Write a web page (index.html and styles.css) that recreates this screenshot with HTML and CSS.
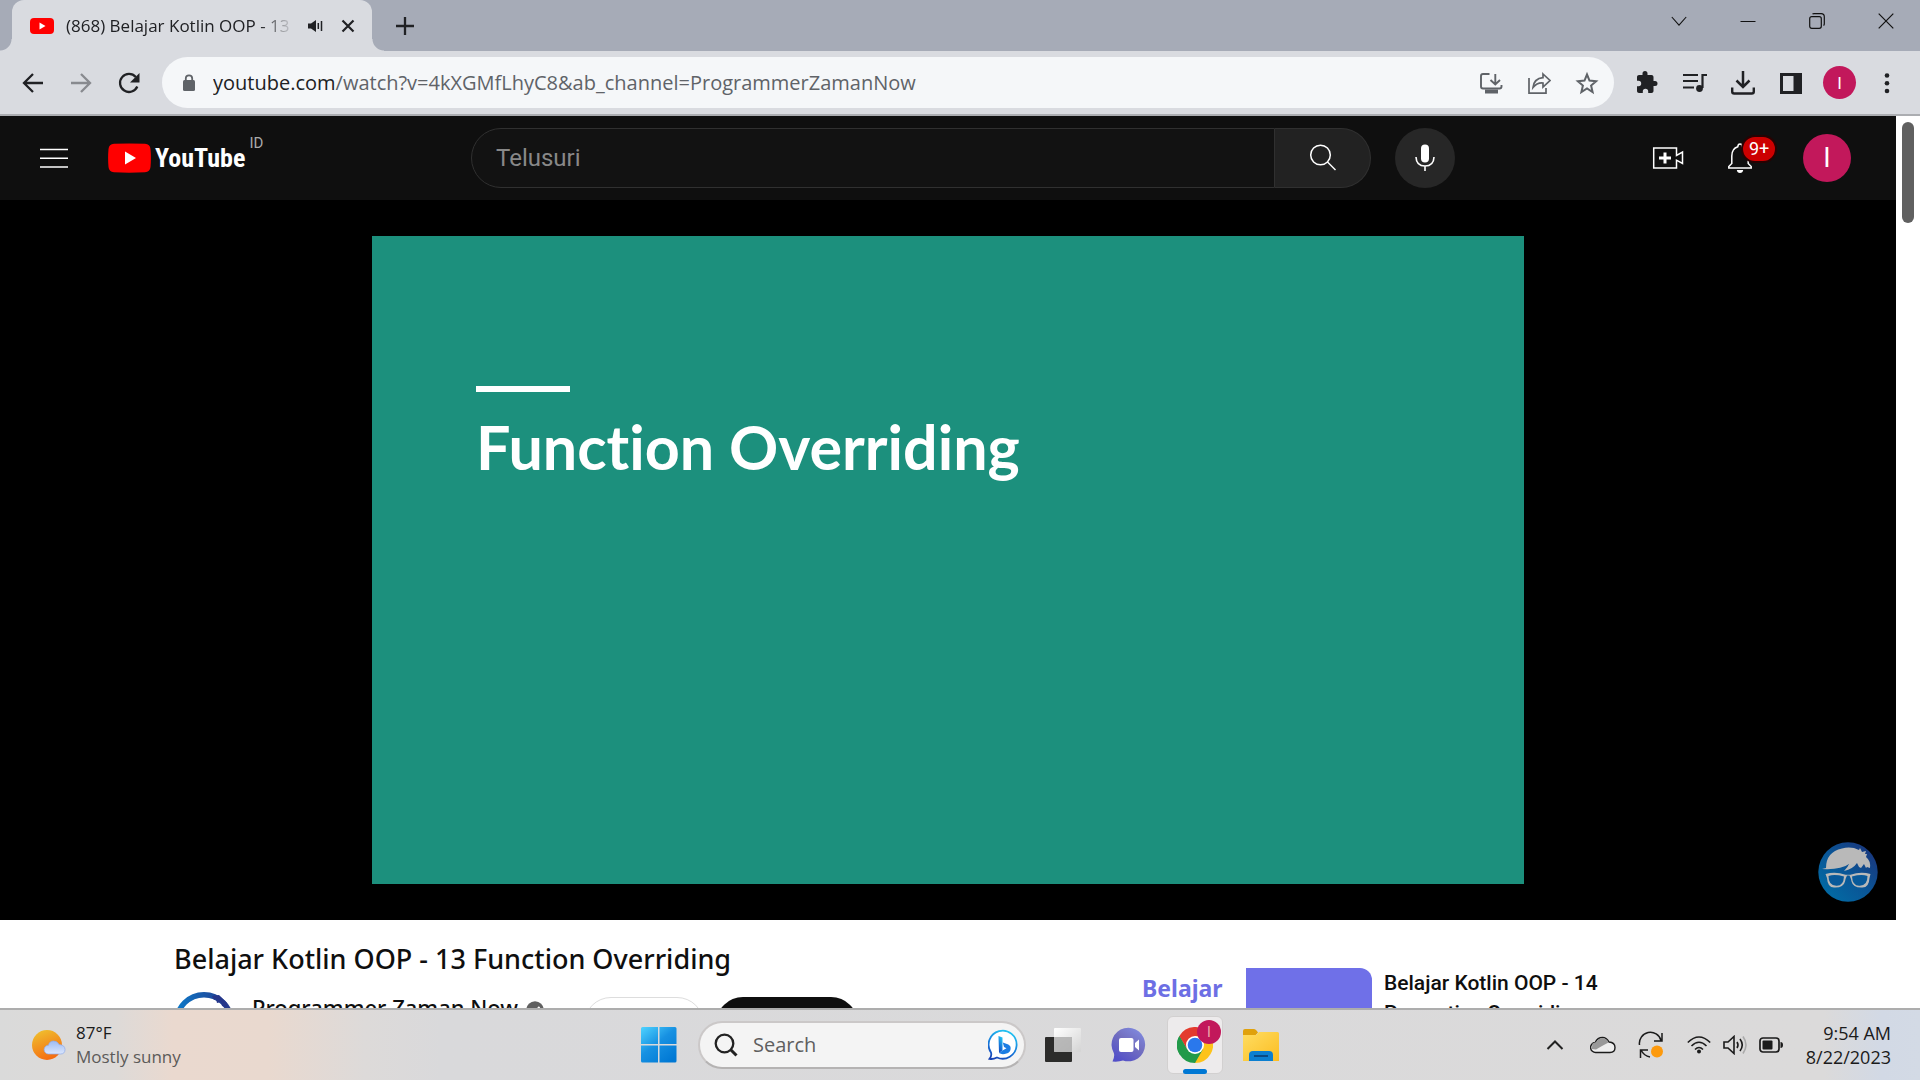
FILE: index.html
```html
<!DOCTYPE html>
<html lang="id">
<head>
<meta charset="utf-8">
<title>Belajar Kotlin OOP - 13 Function Overriding</title>
<link rel="stylesheet" href="styles.css">
</head>
<body>
<header class="tabstrip">
  <div class="tab">
    <svg class="favicon" width="24" height="16" viewBox="0 0 24 16"><rect width="24" height="16" rx="4" fill="#f00"/><path d="M9.500 4.500v7l6-3.500z" fill="#fff"/></svg>
    <span class="tab-title">(868) Belajar Kotlin OOP - 13</span>
    <button class="tab-button" aria-label="Mute tab"><svg width="16" height="14" viewBox="0 0 16 14"><path d="M0 4.500h3L8 1v12L3 9.500H0z" fill="#202124"/><path d="M10.300 4v6M13.500 2v10" stroke="#202124" stroke-width="1.500" fill="none"/></svg></button>
    <button class="tab-button" aria-label="Close tab"><svg width="14" height="14" viewBox="0 0 14 14"><path d="M1.500 1.500l11 11m0-11l-11 11" stroke="#202124" stroke-width="2.200"/></svg></button>
  </div>
  <button class="new-tab" aria-label="New tab"><svg width="18" height="18" viewBox="0 0 18 18"><path d="M9 0v18M0 9h18" stroke="#202124" stroke-width="2.300"/></svg></button>
  <div class="window-controls">
    <button aria-label="Search tabs"><svg width="16" height="16" viewBox="0 0 16 16"><path d="M.8 4L8 12.200 15.200 4" fill="none" stroke="#111" stroke-width="1.100"/></svg></button>
    <button aria-label="Minimize"><svg width="16" height="16" viewBox="0 0 16 16"><path d="M.5 8.500h15" stroke="#111"/></svg></button>
    <button aria-label="Restore"><svg width="16" height="16" viewBox="0 0 16 16"><rect x=".7" y="3.700" width="11.600" height="11.600" rx="2" fill="none" stroke="#111" stroke-width="1.200"/><path d="M3.500 1.200Q4 .7 5 .7h7.200q3.100 0 3.100 3.100V11q0 1-.8 1.500" fill="none" stroke="#111" stroke-width="1.200"/></svg></button>
    <button aria-label="Close"><svg width="16" height="16" viewBox="0 0 16 16"><path d="M.7.700l14.600 14.600m0-14.600L.7 15.300" stroke="#111" stroke-width="1.200"/></svg></button>
  </div>
</header>

<nav class="toolbar">
  <button class="tool" aria-label="Back"><svg width="24" height="24" viewBox="0 0 24 24"><path d="M22 12H3.500M12 3L3 12l9 9" fill="none" stroke="#202124" stroke-width="2.300"/></svg></button>
  <button class="tool" aria-label="Forward"><svg width="24" height="24" viewBox="0 0 24 24"><path d="M2 12h18.500M12 3l9 9-9 9" fill="none" stroke="#888a8f" stroke-width="2.300"/></svg></button>
  <button class="tool" aria-label="Reload"><svg width="24" height="24" viewBox="0 0 24 24"><path d="M20.300 15.500A9 9 0 1 1 18.800 6" fill="none" stroke="#202124" stroke-width="2.300"/><path d="M22.500 2v9.500H13z" fill="#202124"/></svg></button>
  <div class="omnibox">
    <svg class="lock" width="14" height="18" viewBox="0 0 14 18"><rect x="1" y="6" width="12" height="11" rx="1.500" fill="#5f6368"/><path d="M3.800 7V4.500a3.200 3.200 0 0 1 6.400 0V7" fill="none" stroke="#5f6368" stroke-width="1.800"/></svg>
    <a class="url" href="#"><b>youtube.com</b>/watch?v=4kXGMfLhyC8&amp;ab_channel=ProgrammerZamanNow</a>
    <button class="tool" aria-label="Install"><svg width="24" height="24" viewBox="0 0 24 24" fill="none" stroke="#5f6368" stroke-width="1.900"><path d="M10.500 3H4Q2 3 2 5v10.500q0 2 2 2h16.500q2 0 2-2V14"/><path d="M16.300 3v10M11.500 9l4.800 4.500L21 9"/><path d="M6 20.500h13" stroke-width="4"/></svg></button>
    <button class="tool" aria-label="Share"><svg width="24" height="24" viewBox="0 0 24 24" fill="none" stroke="#5f6368" stroke-width="1.700"><path d="M2 7v15.200h17V17"/><path d="M16 3l7 6.500-7 6.500v-4q-6-.5-10 4.500 1-9 10-9.800z"/></svg></button>
    <button class="tool" aria-label="Bookmark"><svg width="24" height="24" viewBox="0 0 24 24"><path d="M12 3.500l2.500 6.100 6.600.6-5 4.300 1.500 6.500L12 17.500 6.400 21l1.500-6.500-5-4.300 6.600-.6z" fill="none" stroke="#5f6368" stroke-width="2"/></svg></button>
  </div>
  <button class="tool" aria-label="Extensions"><svg width="24" height="24" viewBox="0 0 24 24"><path d="M19.500 11H18V7c0-1.100-.9-2-2-2h-4V3.500a2.500 2.500 0 0 0-5 0V5H3.500c-1.100 0-2 .9-2 2v3.800H3a2.700 2.700 0 0 1 0 5.400H1.500V21c0 1.100.9 2 2 2h3.800v-1.500a2.700 2.700 0 0 1 5.400 0V23H16c1.100 0 2-.9 2-2v-5h1.500a2.500 2.500 0 0 0 0-5z" transform="translate(.5 -1)" fill="#202124"/></svg></button>
  <button class="tool" aria-label="Media"><svg width="24" height="24" viewBox="0 0 24 24" fill="none" stroke="#202124" stroke-width="2.200"><path d="M0 4h15M0 10h15M0 16.500h11M24 4h-4.500v13"/><circle cx="16.500" cy="17.500" r="3.400" fill="#202124" stroke="none"/></svg></button>
  <button class="tool" aria-label="Downloads"><svg width="24" height="24" viewBox="0 0 24 24" fill="none" stroke="#202124" stroke-width="2.500"><path d="M12 0v15M5.500 9.500L12 16l6.500-6.500"/><path d="M1.200 16.500v4q0 2 2 2h17.600q2 0 2-2v-4" stroke-width="2.400"/></svg></button>
  <button class="tool" aria-label="Side panel"><svg width="24" height="24" viewBox="0 0 24 24"><path d="M1 2h22v21H1zm3 3v15h10.500V5z" fill-rule="evenodd" fill="#202124"/></svg></button>
  <button class="profile" aria-label="Profile">I</button>
  <button class="tool" aria-label="Menu"><svg width="24" height="24" viewBox="0 0 24 24" fill="#202124"><circle cx="12" cy="4.500" r="2.300"/><circle cx="12" cy="12.200" r="2.300"/><circle cx="12" cy="20" r="2.300"/></svg></button>
</nav>

<div class="viewport">
  <div class="page">
    <header class="masthead">
      <div class="brand">
        <button class="icon-button" aria-label="Guide"><svg width="28" height="20" viewBox="0 0 28 20"><path d="M0 1.500h28M0 10.200h28M0 19h28" stroke="#fff" stroke-width="1.500"/></svg></button>
        <a class="logo" href="#">
          <svg width="43" height="30" viewBox="0 0 43 30"><path d="M6 .8Q21 0 37 .8 42 1 42.500 6q.8 9 0 18-.5 5-5.500 5.300-16 .8-31 0Q1 29 .5 24q-.8-9 0-18Q1 1 6 .8z" fill="#f00"/><path d="M17 8.500v13L28 15z" fill="#fff"/></svg>
          <span class="wordmark">YouTube</span><span class="country">ID</span>
        </a>
      </div>
      <form class="search">
        <input class="search-box" type="text" placeholder="Telusuri" aria-label="Telusuri">
        <button class="search-go" type="button" aria-label="Cari"><svg width="30" height="30" viewBox="0 0 30 30" fill="none" stroke="#fff" stroke-width="1.500"><circle cx="12.500" cy="12" r="9.800"/><path d="M19.500 19l8 8"/></svg></button>
        <button class="mic" type="button" aria-label="Suara"><svg width="30" height="30" viewBox="0 0 30 30"><rect x="11" y="1.500" width="8" height="18" rx="4" fill="#fff"/><path d="M6 14q.3 9 9 9t9-9M15 23v5" fill="none" stroke="#fff" stroke-width="1.600"/></svg></button>
      </form>
      <div class="account">
        <button class="icon-button" aria-label="Buat"><svg width="32" height="24" viewBox="0 0 32 24" fill="none" stroke="#fff" stroke-width="1.500"><path d="M24.500 14.200V22H1.700V2h22.800v7.500l6-3.500v11.500l-6-3.300z"/><path d="M13 6.500v11M7 12h12" stroke-width="3"/></svg></button>
        <button class="icon-button bell" aria-label="Notifikasi"><svg width="26" height="32" viewBox="0 0 26 32"><path d="M1.800 26v-1.500l3-3V14q0-7.500 6-9.300Q11 2 13 2t2.200 2.700q6 1.800 6 9.300v7.500l3 3V26z" fill="none" stroke="#fff" stroke-width="1.500"/><path d="M9.800 28h6.400q-.4 3-3.200 3t-3.200-3z" fill="#fff"/></svg><span class="badge">9+</span></button>
        <button class="avatar" aria-label="Akun">I</button>
      </div>
    </header>

    <section class="player">
      <div class="slide">
        <div class="slide-rule"></div>
        <h2 class="slide-title">Function Overriding</h2>
      </div>
      <svg class="watermark" width="60" height="60" viewBox="0 0 60 60">
        <defs><linearGradient id="mark" x1="0" y1="1" x2="1" y2="0"><stop offset="0" stop-color="#0071a8"/><stop offset=".5" stop-color="#0a5596"/><stop offset="1" stop-color="#1d2f77"/></linearGradient></defs>
        <circle cx="30" cy="30" r="29.700" fill="url(#mark)"/>
        <path d="M8 26Q8 10 24 6.500 33 4 41 8l1-2 2 4 4-1-1 3 2 0-1 3q5 4 4 11l-3-1-1 1-2-4-3 4-2-1-2-4q-4 6-13 8 4-4 5-7-8 6-27 5z" fill="#b9b9b9"/>
        <path d="M7.500 32q10-3 20 .8h5q10-3.800 20-.8l-1 4q-.5 9.500-7 9.500-9.500.5-11-6-.5-3-2-6h-2.500q-1.500 3-2 6-1.500 6.500-11 6-6.500 0-7-9.500z" fill="#b9b9b9"/>
        <path d="M10.500 34q6-2 15.500.5-.5 9.500-7.500 9.200-8 .2-8-9.700zM34 34.500q9.500-2.500 15.500-.5 0 9.900-8 9.700-7 .3-7.500-9.200z" fill="#08599a"/>
      </svg>
    </section>

    <main class="columns">
      <article class="primary">
        <h1 class="title">Belajar Kotlin OOP - 13 Function Overriding</h1>
        <div class="owner">
          <svg width="60" height="60" viewBox="0 0 60 60"><defs><linearGradient id="ring" x1="0" x2="1"><stop offset="0" stop-color="#0d79c8"/><stop offset="1" stop-color="#25368a"/></linearGradient></defs><circle cx="30" cy="30" r="27.300" fill="#fff" stroke="url(#ring)" stroke-width="5.400"/><path d="M38 4l2 4 2-1 1 4 4-1 1 4 5 2 0-5-8-8z" fill="#25368a"/></svg>
          <a class="channel" href="#">Programmer Zaman Now</a>
          <svg class="verified" width="18" height="18" viewBox="0 0 18 18"><circle cx="9" cy="9" r="8.700" fill="#606060"/><path d="M4.500 9.300l3 3 6-6.500" fill="none" stroke="#fff" stroke-width="1.900"/></svg>
          <button class="join" aria-label="Gabung"></button>
          <button class="subscribe" aria-label="Subscribe"></button>
        </div>
      </article>
      <aside class="related">
        <a class="thumb" href="#"><span class="thumb-text">Belajar</span><span class="thumb-fill"></span></a>
        <a class="related-title" href="#">Belajar Kotlin OOP - 14<br>Properties Overriding</a>
      </aside>
    </main>
  </div>
  <div class="scrollbar"><div class="scroll-thumb"></div></div>
</div>

<footer class="taskbar">
  <button class="weather">
    <svg width="34" height="34" viewBox="0 0 34 34"><defs><linearGradient id="sun" x1=".2" y1="0" x2=".6" y2="1"><stop offset="0" stop-color="#efc02f"/><stop offset="1" stop-color="#f56a10"/></linearGradient><linearGradient id="puff" x1="0" y1="0" x2="0" y2="1"><stop offset="0" stop-color="#9dbcf5"/><stop offset="1" stop-color="#dbe6fc"/></linearGradient></defs><circle cx="15" cy="17" r="15" fill="url(#sun)"/><path d="M16.500 26a4.400 4.400 0 0 1 0-8.800q1-4.200 5-4.200t5.500 3.500q6 .5 6 5t-4.500 4.500z" fill="url(#puff)" stroke="#8fabea" stroke-width=".7"/></svg>
    <span class="weather-text"><span>87°F</span><span class="muted">Mostly sunny</span></span>
  </button>
  <div class="apps">
    <button class="app" aria-label="Start"><svg width="36" height="36" viewBox="0 0 36 36"><defs><linearGradient id="win" x1="0" y1="0" x2=".8" y2="1"><stop offset="0" stop-color="#4fd3ff"/><stop offset=".5" stop-color="#1791e2"/><stop offset="1" stop-color="#0078d4"/></linearGradient></defs><path d="M1.500 0H17v17H0V1.500Q0 0 1.500 0zM18.500 0h15.500q1.500 0 1.500 1.500V17h-17zM0 18.500h17V35.500H1.500Q0 35.500 0 34zM18.500 18.500h17V34q0 1.500-1.500 1.500H18.500z" fill="url(#win)"/></svg></button>
    <label class="task-search">
      <svg width="24" height="24" viewBox="0 0 24 24" fill="none" stroke="#222" stroke-width="2.300"><circle cx="10.500" cy="10.500" r="8.800"/><path d="M16.500 16.500l6 6" stroke-width="3"/></svg>
      <input type="text" placeholder="Search" aria-label="Search">
      <svg width="32" height="32" viewBox="0 0 32 32"><defs><linearGradient id="bing" x1=".6" y1="0" x2=".2" y2="1"><stop offset="0" stop-color="#22c1f1"/><stop offset=".6" stop-color="#1673d8"/><stop offset="1" stop-color="#1743b5"/></linearGradient></defs><path d="M1.500 29.800Q4 27 3 23.500A14 14 0 1 1 9 28.500Q5 30.500 1.500 29.800z" fill="#fff" stroke="url(#bing)" stroke-width="1.800"/><path d="M10.500 7l4 1.500v13L11 24z" fill="url(#bing)"/><path d="M11 24l3.500-2.500 4-2.300-2.500-1.200-1.200-4.500 5.500 2q3 1.500 2.200 5-.5 3-4 4-4.500 1.500-7.500-.5z" fill="#1b7de3"/></svg>
    </label>
    <button class="app" aria-label="Task view"><svg width="36" height="36" viewBox="0 0 36 36"><defs><linearGradient id="pane" x1="0" y1="0" x2="1" y2="1"><stop offset="0" stop-color="#fff"/><stop offset="1" stop-color="#d4d4d4"/></linearGradient></defs><rect x="0" y="10" width="27" height="25" rx="1" fill="#2c2c2b"/><rect x="9" y="1" width="27" height="24" rx="1" fill="url(#pane)"/><path d="M9 10h18v15H9z" fill="#aaa" opacity=".8"/></svg></button>
    <button class="app" aria-label="Chat"><svg width="36" height="36" viewBox="0 0 36 36"><defs><linearGradient id="chat" x1="1" y1="0" x2=".3" y2="1"><stop offset="0" stop-color="#8390e8"/><stop offset=".5" stop-color="#7370c0"/><stop offset="1" stop-color="#5350c8"/></linearGradient></defs><path d="M1.500 34.500Q4 29 2.800 26A16.800 16.800 0 1 1 12 33.500Q8 35 1.500 34.500z" fill="url(#chat)"/><rect x="8" y="11" width="14.500" height="14" rx="2" fill="#fff"/><path d="M24 16l4-3.500v11L24 20z" fill="#fff"/></svg></button>
    <button class="app active" aria-label="Chrome"><svg width="36" height="36" viewBox="0 0 36 36"><path d="M18 18L2.400 9A18 18 0 0 1 33.600 9z" fill="#e33b2e"/><path d="M18 18V9h15.600A18 18 0 0 1 18 36z" fill="#fdc31a"/><path d="M2.400 9A18 18 0 0 0 18 36l7.800-13.500L18 18l-7.800 4.500z" fill="#229a4a"/><path d="M2.400 9H18v9h-9.500z" fill="#e33b2e"/><path d="M2.400 9l7.800 13.500L18 18V9z" fill="#e33b2e"/><path d="M2.400 9l7.800 13.500 3 1.500L11 30 3 27.900A18 18 0 0 1 2.400 9z" fill="#229a4a"/><circle cx="18" cy="18" r="9" fill="#fff"/><circle cx="18" cy="18" r="7.300" fill="#2a78ec"/></svg><span class="app-badge">I</span></button>
    <button class="app" aria-label="File Explorer"><svg width="36" height="36" viewBox="0 0 36 36"><defs><linearGradient id="fold" x1="0" y1="0" x2="1" y2="1"><stop offset="0" stop-color="#ffdd62"/><stop offset="1" stop-color="#fbbd22"/></linearGradient></defs><path d="M0 4q0-2 2-2h9q1.500 0 2.500 1.500L15 5.500 12 9H0z" fill="#e0a10c"/><path d="M0 8h12q1.500 0 2.500-1.200L16 5h18.500Q36 5 36 6.500V34H0z" fill="url(#fold)"/><path d="M6 34v-6q0-4 4-4h16q4 0 4 4v6z" fill="#0b7fd0"/><path d="M11 29h14" stroke="#0a4a84" stroke-width="2"/></svg></button>
  </div>
  <div class="tray">
    <button class="tray-button" aria-label="Show hidden icons"><svg width="18" height="12" viewBox="0 0 18 12"><path d="M1.500 10L9 2.500l7.500 7.500" fill="none" stroke="#222" stroke-width="2"/></svg></button>
    <button class="tray-button" aria-label="OneDrive"><svg width="26" height="20" viewBox="0 0 26 20"><path d="M6 17.500a5 5 0 0 1-.8-10Q7.500 2.500 12.500 2.500q4 0 6.500 4.500 6 .5 6 5.500t-5 5z" fill="#eee" stroke="#1b1b1b" stroke-width="1.400"/><path d="M2.500 8.500Q5 7 6.500 7q2-4 6-4t6 4.500L12 11 6 14.500 1.800 14z" fill="#999"/></svg></button>
    <button class="tray-button" aria-label="Windows Update"><svg width="26" height="28" viewBox="0 0 26 28" fill="none" stroke="#1b1b1b" stroke-width="1.500"><path d="M1.500 14A11 11 0 0 1 23 9.500M24 2v8h-8M12 26Q6 25 3 19M2.500 27v-8H10"/><circle cx="19" cy="20.500" r="6" fill="#fd9a0d" stroke="none"/></svg></button>
    <button class="tray-status" aria-label="Network, volume, battery">
      <svg width="24" height="18" viewBox="0 0 24 18" fill="none" stroke="#1b1b1b" stroke-width="1.600"><path d="M.8 6.500q11.200-11 22.400 0M4.500 10q7.500-7.500 15 0M8 13.500q4-4 8 0"/><circle cx="12" cy="15.500" r="2" fill="#1b1b1b" stroke="none"/></svg>
      <svg width="24" height="20" viewBox="0 0 24 20" fill="none" stroke="#1b1b1b" stroke-width="1.600"><path d="M1 7h4l6-5.500v17L5 13H1z"/><path d="M14 7q2 3 0 6M17 4q4.500 6 0 12"/><path d="M20 1.500q6 8.500 0 17" stroke="#aaa"/></svg>
      <svg width="24" height="18" viewBox="0 0 24 18"><rect x="1" y="2" width="19" height="14" rx="3" fill="none" stroke="#1b1b1b" stroke-width="1.700"/><rect x="3.500" y="4.500" width="10" height="9" rx="1" fill="#1b1b1b"/><path d="M21.500 6q2.500 0 2.500 3t-2.500 3z" fill="#1b1b1b"/></svg>
    </button>
    <button class="clock"><span>9:54 AM</span><span>8/22/2023</span></button>
  </div>
</footer>
</body>
</html>
```
FILE: styles.css
```css
* { box-sizing: border-box; }
body {
  margin: 0;
  height: 100vh;
  display: flex;
  flex-direction: column;
  overflow: hidden;
  background: #fff;
  font-family: "Noto Sans", "Open Sans", sans-serif;
}
button {
  display: flex;
  align-items: center;
  justify-content: center;
  padding: 0;
  border: 0;
  background: none;
  font: inherit;
  color: inherit;
}
input { border: 0; outline: 0; background: none; padding: 0; font: inherit; min-width: 0; }
a { color: inherit; text-decoration: none; }
svg { display: block; flex: none; }

/* Browser tabs */
.tabstrip {
  display: flex;
  flex: none;
  height: 51px;
  padding-left: 12px;
  background: #a6abb7;
}
.tab {
  position: relative;
  display: flex;
  align-items: center;
  width: 360px;
  padding: 0 12px 0 18px;
  border-radius: 12px 12px 0 0;
  background: #d9dbe0;
}
.tab::before, .tab::after {
  content: "";
  position: absolute;
  bottom: 0;
  width: 12px;
  height: 12px;
}
.tab::before { right: 100%; background: radial-gradient(circle at 0 0, transparent 11px, #d9dbe0 12px); }
.tab::after { left: 100%; background: radial-gradient(circle at 100% 0, transparent 11px, #d9dbe0 12px); }
.tab-title {
  flex: 1;
  margin: 0 10px 0 12px;
  overflow: hidden;
  white-space: nowrap;
  font-family: "Open Sans", sans-serif;
  font-size: 17px;
  line-height: 24px;
  color: #202124;
  -webkit-mask-image: linear-gradient(90deg, #000 85%, transparent);
  mask-image: linear-gradient(90deg, #000 85%, transparent);
}
.tab-button { width: 24px; height: 24px; }
.tab-button + .tab-button { margin-left: 8px; }
.new-tab { width: 42px; margin-left: 12px; }
.window-controls { display: flex; margin-left: auto; height: 42px; }
.window-controls button { width: 69px; }

/* Browser toolbar */
.toolbar {
  display: flex;
  align-items: center;
  flex: none;
  height: 65px;
  padding: 0 9px;
  border-bottom: 2px solid #abadb1;
  background: #d9dbe0;
}
.tool { flex: none; width: 48px; height: 42px; }
.omnibox {
  display: flex;
  flex: 1;
  align-items: center;
  height: 51px;
  margin: 0 9px;
  padding: 0 3px 0 20px;
  border-radius: 26px;
  background: #f5f7f9;
}
.url {
  flex: 1;
  margin-left: 17px;
  overflow: hidden;
  white-space: nowrap;
  font-family: "Open Sans", sans-serif;
  font-size: 20px;
  color: #5f6368;
}
.url b { font-weight: 400; color: #202124; }
.profile {
  width: 33px;
  height: 33px;
  margin: 0 7px 0 8px;
  border-radius: 50%;
  background: #c2185b;
  color: #fff;
  font-family: Roboto, sans-serif;
  font-size: 17px;
}

/* Page */
.viewport { display: flex; flex: 1; min-height: 0; }
.page { flex: 1; min-width: 0; overflow: hidden; }
.scrollbar { width: 24px; padding: 6px; background: #fff; }
.scroll-thumb { height: 101px; border-radius: 6px; background: #606060; }

.masthead {
  display: flex;
  align-items: center;
  height: 84px;
  padding: 0 45px 0 24px;
  background: #0f0f0f;
  color: #fff;
  font-family: Roboto, sans-serif;
}
.icon-button { width: 60px; height: 60px; }
.brand { display: flex; align-items: center; flex: none; width: 447px; gap: 24px; }
.logo { display: flex; align-items: center; }
.wordmark {
  margin-left: 4px;
  font-family: "Liberation Sans Narrow", "Roboto Condensed", Roboto, sans-serif;
  font-weight: 700;
  font-size: 26px;
}
.country { align-self: flex-start; margin: -9px 0 0 4px; font-size: 15px; line-height: 18px; color: #aaa; }
.search { display: flex; flex: 1; height: 60px; }
.search-box {
  flex: 1;
  padding-left: 24px;
  border: 1px solid #303030;
  border-radius: 30px 0 0 30px;
  background: #121212;
  color: #fff;
  font-size: 24px;
}
.search-box::placeholder { color: #888; opacity: 1; }
.search-go {
  width: 96px;
  border: 1px solid #303030;
  border-left: 0;
  border-radius: 0 30px 30px 0;
  background: #222;
}
.mic { width: 60px; margin-left: 24px; border-radius: 50%; background: #272727; }
.account { display: flex; align-items: center; margin-left: 183px; gap: 12px; }
.bell { position: relative; }
.badge {
  position: absolute;
  top: 7px;
  left: 31px;
  padding: 0 6px;
  border: 2px solid #280202;
  border-radius: 14px;
  background: #c00;
  font-size: 18px;
  line-height: 24px;
}
.avatar {
  width: 48px;
  height: 48px;
  margin-left: 21px;
  border-radius: 50%;
  background: #c2185b;
  font-size: 27px;
}

.player {
  position: relative;
  display: flex;
  justify-content: center;
  padding: 36px 0;
  background: #000;
}
.slide {
  width: 1152px;
  max-width: 100%;
  aspect-ratio: 16 / 9;
  padding: 150px 104px 0;
  background: #1c907d;
  color: #fff;
}
.slide-rule { width: 94px; height: 6px; background: #fff; }
.slide-title {
  margin: 18px 0 0;
  font: 700 61px/74px Lato, sans-serif;
  font-variant-ligatures: none;
  white-space: nowrap;
}
.watermark { position: absolute; right: 18px; bottom: 18px; }

.columns { display: flex; gap: 36px; padding: 0 174px; color: #0f0f0f; }
.primary { flex: 1; min-width: 0; }
.title { margin: 18px 0 12px; font: 500 27px/42px "Noto Sans", sans-serif; }
.owner { display: flex; height: 60px; }
.channel { margin: 0 8px 0 18px; font: 500 22px/30px "Noto Sans", sans-serif; white-space: nowrap; }
.verified { margin-top: 9px; }
.join, .subscribe { height: 54px; margin-top: 5px; border-radius: 27px; }
.join { width: 120px; margin-left: 40px; border: 1px solid #ddd; }
.subscribe { width: 142px; margin-left: 12px; background: #0f0f0f; }
.related { display: flex; width: 602px; gap: 12px; padding-top: 48px; font-family: Roboto, sans-serif; }
.thumb {
  display: flex;
  width: 252px;
  height: 142px;
  border-radius: 12px;
  overflow: hidden;
}
.thumb-text { width: 126px; padding-left: 22px; font: 700 23px/40px "Noto Sans", sans-serif; color: #6d6fe4; }
.thumb-fill { flex: 1; background: #6f70e8; }
.related-title { font-weight: 500; font-size: 21px; line-height: 30px; }

/* Taskbar */
.taskbar {
  display: grid;
  grid-template-columns: 1fr auto 1fr;
  flex: none;
  height: 72px;
  padding-bottom: 1px;
  border-top: 2px solid #adadad;
  background: linear-gradient(90deg, #dadada 0, #dddad8 6%, #ead9cf 9%, #e9d9cf 14%, #dddad9 19%, #d9d9db 23%, #dbdada 95%, #d2d9e5 98%, #d3dae5 100%);
  color: #1b1b1b;
  font-family: "Open Sans", sans-serif;
  font-size: 17px;
  line-height: 24px;
}
.weather { justify-self: start; padding-left: 32px; gap: 10px; }
.weather-text { display: flex; flex-direction: column; align-items: flex-start; }
.muted { color: #5c5a59; }
.apps { display: flex; align-items: center; }
.app { position: relative; width: 66px; height: 58px; }
.active::before {
  content: "";
  position: absolute;
  inset: 0 5px;
  border: 1px solid #d2d0d0;
  border-radius: 6px;
  background: #edebec;
}
.active::after {
  content: "";
  position: absolute;
  bottom: 0;
  width: 24px;
  height: 5px;
  border-radius: 3px;
  background: #0078d4;
}
.active svg { position: relative; }
.app-badge {
  position: absolute;
  top: 4px;
  left: 35px;
  width: 24px;
  height: 24px;
  border-radius: 50%;
  background: #c2185b;
  color: #eaa;
  font: 14px/24px Roboto, sans-serif;
}
.task-search {
  display: flex;
  align-items: center;
  width: 328px;
  height: 48px;
  margin: 0 4px 0 6px;
  padding: 0 4px 0 14px;
  border: 2px solid #cbc8c8;
  border-bottom-color: #b5b3b3;
  border-radius: 24px;
  background: #f4f4f4;
}
.task-search input { flex: 1; margin-left: 15px; font-size: 20px; }
.task-search input::placeholder { color: #5f5f5f; opacity: 1; }
.tray { display: flex; justify-self: end; padding-right: 29px; }
.tray-button { width: 48px; }
.tray-status { gap: 12px; padding: 0 12px; }
.clock { flex-direction: column; align-items: flex-end; width: 96px; font-size: 18px; }
```
